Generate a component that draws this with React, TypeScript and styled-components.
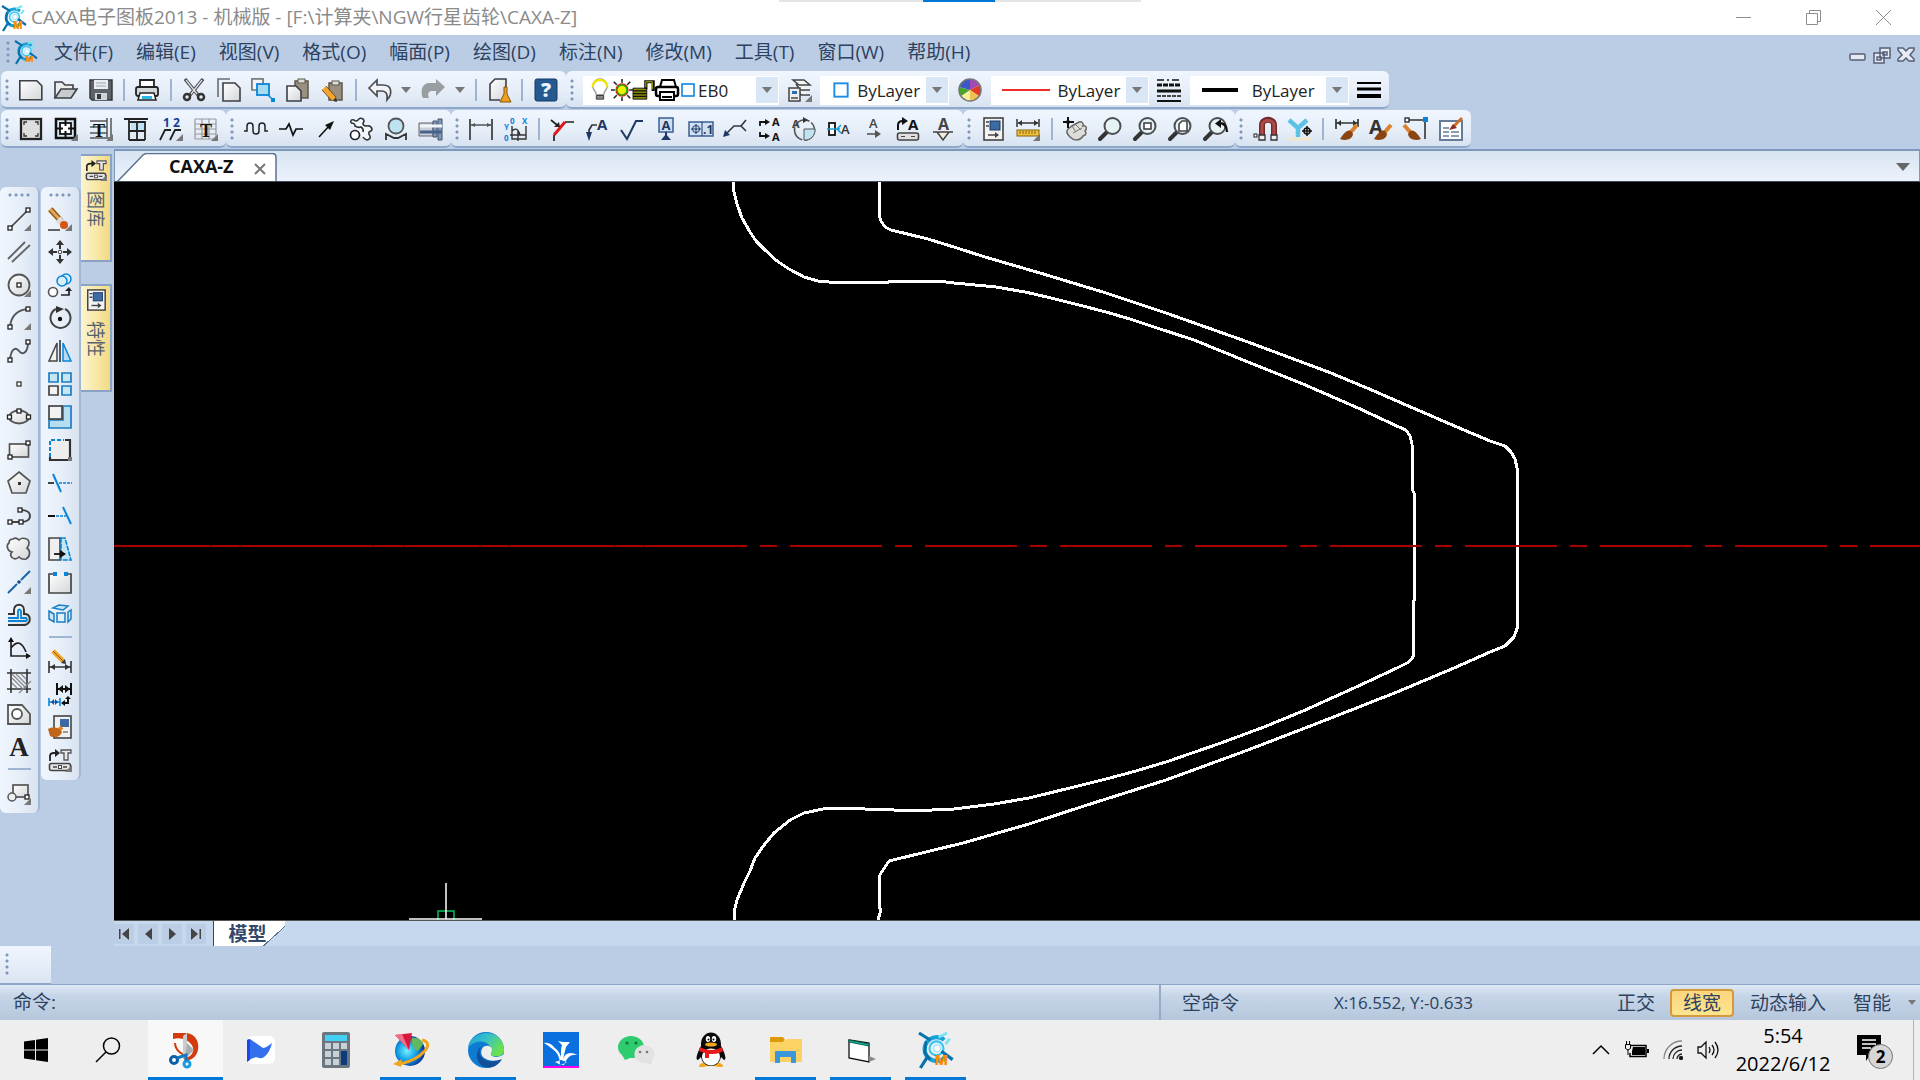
import React from 'react';
import styled, { createGlobalStyle } from 'styled-components';

const INK = '#3c3f44';
const NAVY = '#1f3864';
const BLUE = '#0a84d8';
const UI_FONT = '"Open Sans", "Noto Sans CJK SC", sans-serif';

const GlobalStyle = createGlobalStyle`
  * { box-sizing: border-box; }
  body { margin: 0; background: #bbcde5; font-family: ${UI_FONT}; color: #2c4260; }
  button, select, input { font: inherit; color: inherit; }
  button { border: 0; padding: 0; background: none; }
`;

/* ---------- icons, each on a 24 x 24 grid ---------- */

const corner = <path d="M24 17v7h-7z" fill="#777" />;
const sheet = (x: number, y: number, w: number, h: number) => (
  <path d={`M${x} ${y}h${w - 5}l5 5v${h - 5}h${-w}z`} fill="url(#pale)" stroke={INK} strokeWidth="1.6" />
);
const lens = (
  <>
    <path d="M8.500 15.500L2 22" stroke="#333" strokeWidth="4" strokeLinecap="round" />
    <circle cx="14.500" cy="9" r="8" fill="#e6f3f3" stroke="#4b4f52" strokeWidth="2" />
  </>
);
const node = (x: number, y: number) => (
  <rect x={x - 2} y={y - 2} width="4" height="4" fill="#fff" stroke="#222" strokeWidth="1.300" />
);
const brush = (
  <>
    <path d="M22 8l-7 8" stroke="#d9822b" strokeWidth="4" />
    <path d="M16 14c-4-2-7 2-11 8 5 2 12 1 13-5z" fill="#8a4513" />
  </>
);
const clipboard = (
  <>
    <rect x="9" y="3" width="13" height="17" fill="#9a907f" stroke="#5d564b" strokeWidth="1.500" />
    <rect x="12" y="1" width="7" height="4" fill="#ddd" stroke="#5d564b" />
  </>
);
const libraryGlyph = (
  <>
    <path d="M2 13V8q0-3 4-3h2" fill="none" stroke="#222" strokeWidth="1.800" />
    <path d="M7 1l5 4-5 4z" fill="#222" />
    <path d="M13 2h10v3h-3v7h-4V5h-3z" fill="#e8e8e8" stroke="#555" strokeWidth="1.300" />
    <rect x="1.500" y="15.500" width="21" height="7" rx="2" fill="#e4e4e4" stroke="#444" strokeWidth="1.600" />
    <path d="M5 19h4m6 0h4" stroke="#444" strokeWidth="1.500" />
    <rect x="10.500" y="17.500" width="3" height="3" fill="#fff" stroke="#444" />
  </>
);
const propertyGlyph = (
  <>
    <rect x="3" y="1" width="19" height="22" fill="#f2f2f2" stroke="#444" strokeWidth="1.600" />
    <path d="M5 5h3M5 9h3" stroke="#444" strokeWidth="1.500" />
    <rect x="9" y="4" width="10" height="9" fill="#3b6aa5" stroke="#1f3864" />
    <path d="M7 18h9" stroke="#444" strokeWidth="1.500" />
    <path d="M14 15l4 3-4 3z" fill="#444" />
  </>
);

const icons: Record<string, React.ReactNode> = {
  caxa: (
    <>
      <path d="M18 5A8.500 8.500 0 1 0 19 17" fill="none" stroke="#16a3d8" strokeWidth="3" />
      <path d="M5 6l-1 8 4 5" fill="none" stroke="#0a6aa6" strokeWidth="1.800" />
      <circle cx="12.500" cy="11" r="5" fill="#dff6ff" stroke="#3cc3ee" strokeWidth="1.500" />
      <circle cx="13" cy="11" r="2.500" fill="#fff" stroke="#9fe0f5" strokeWidth="1" />
      <path d="M0 0l8 5M1 25l5-8M16 13l8 6" stroke="#0872ae" strokeWidth="2.300" />
      <path d="M14 3l6-3M19 8l3-4" stroke="#7ce2f5" strokeWidth="2" />
      <text x="11" y="23" fontSize="10" fontWeight="800" fill="#ff8c00">M</text>
    </>
  ),
  new: sheet(0.800, 2.800, 22, 19),
  open: (
    <>
      <path d="M1 20V4h7l3 3h8v4" fill="#ececec" stroke={INK} strokeWidth="1.600" />
      <path d="M1 20l6-9h16l-6 9z" fill="#c9cbce" stroke={INK} strokeWidth="1.600" />
    </>
  ),
  save: (
    <>
      <path d="M1 2h22v20H3l-2-2z" fill="#5d6168" stroke="#34373c" strokeWidth="1.500" />
      <rect x="5" y="2" width="14" height="9" fill="#e9edf2" />
      <path d="M7 5h10M7 8h10" stroke="#9aa3ad" />
      <rect x="6" y="15" width="12" height="7" fill="#cfd3d8" />
      <rect x="8" y="16" width="4" height="5" fill="#34373c" />
    </>
  ),
  print: (
    <>
      <path d="M5 9V2h14v7" fill="#fff" stroke="#222" strokeWidth="1.800" />
      <rect x="1" y="9" width="22" height="9" rx="2" fill="#d5d8db" stroke="#222" strokeWidth="1.800" />
      <path d="M5 15h14l2 7H3z" fill="#fff" stroke="#222" strokeWidth="1.500" />
      <path d="M7 18h10v3H7z" fill="#29b6e0" />
    </>
  ),
  cut: (
    <>
      <path d="M3 1l13 16M21 1L8 17" stroke="#44474c" strokeWidth="3.500" />
      <path d="M4 2l11 14M20 2L9 16" stroke="#dfe2e4" strokeWidth="1.300" />
      <circle cx="5" cy="19" r="3" fill="none" stroke="#333" strokeWidth="2.500" />
      <circle cx="19" cy="19" r="3" fill="none" stroke="#333" strokeWidth="2.500" />
    </>
  ),
  copy: (
    <>
      <path d="M1 19V1h12" fill="none" stroke="#6a6d72" strokeWidth="1.600" />
      {sheet(6, 5, 17, 18)}
    </>
  ),
  copyBase: (
    <>
      <path d="M1 12V1h11v4" fill="#f3f3f3" stroke="#777" strokeWidth="1.500" />
      <path d="M1 1h11v11H1z" fill="#f3f3f3" stroke="#777" strokeWidth="1.500" />
      <rect x="6" y="6" width="12" height="11" fill="#a6dcf2" stroke={BLUE} strokeWidth="1.800" />
      <path d="M17 17l4 4" stroke={BLUE} strokeWidth="1.500" fill="none" />
      <rect x="20" y="20" width="4" height="4" fill={BLUE} />
    </>
  ),
  paste: (
    <>
      {clipboard}
      {sheet(1, 8, 14, 15)}
    </>
  ),
  pasteEdit: (
    <>
      <g transform="translate(-1 2)">{clipboard}</g>
      <path d="M3 10l10 11" stroke="#f2a52c" strokeWidth="5" />
      <path d="M1 12L11 23M5 8l10 11" stroke="#7c4a10" strokeWidth="1" />
      <path d="M12 23l4 1-1-5z" fill="#333" />
    </>
  ),
  undo: <path d="M1 10l8-8v5h6c10 0 9 10 4 15 1-6-1-9-5-9H9v5z" fill="#f2f4f6" stroke="#4a4d52" strokeWidth="1.700" />,
  redo: <path d="M24 9l-9-8v4H9C-1 5 0 16 2 20h6c-2-5 0-7 3-7h4v5z" fill="#9a9da1" />,
  cleanDoc: (
    <>
      <path d="M19 20V1H8L3 6v16h10" fill="url(#pale)" stroke={INK} strokeWidth="1.600" />
      <path d="M17 9h3v7l4 8H13l4-8z" fill="#f0a01e" stroke="#80520e" />
    </>
  ),
  help: (
    <>
      <rect x="1" y="1" width="22" height="22" rx="2" fill="#245a90" stroke="#123a64" />
      <text x="12" y="19" textAnchor="middle" fontSize="20" fontWeight="800" fill="#e8f3fb">?</text>
    </>
  ),
  bulb: (
    <>
      <path d="M8 17c0-4-4-5-4-9a8 8 0 0 1 16 0c0 4-4 5-4 9z" fill="#fff" stroke="#999" strokeWidth="1.500" />
      <path d="M4 9a8 8 0 0 1 16 0" fill="none" stroke="#eee600" strokeWidth="2.500" />
      <path d="M8 18h8v4H8z" fill="#888" stroke="#333" />
    </>
  ),
  sun: (
    <>
      <path d="M12 0v24M0 12h24M3 3l18 18M21 3L3 21" stroke="#222" strokeWidth="1.700" />
      <circle cx="12" cy="12" r="8" fill="#fff" />
      <circle cx="12" cy="12" r="6.500" fill="#eef200" stroke="#e02010" strokeWidth="1.500" />
      <circle cx="12" cy="12" r="5.400" fill="none" stroke="#18a818" strokeWidth="1.500" />
    </>
  ),
  unlock: (
    <>
      <path d="M0 10h15v12H0z" fill="#8a8a00" stroke="#111" />
      <path d="M0 13h15M0 16h15M0 19h15" stroke="#111" strokeWidth="1.500" />
      <path d="M14 11V3h8v10" fill="none" stroke="#111" strokeWidth="3.500" />
      <path d="M14 9V3h7v8" fill="none" stroke="#c8c800" strokeWidth="1" />
    </>
  ),
  plot: (
    <>
      <path d="M5 9l2-7h12l2 7" fill="#fff" stroke="#000" strokeWidth="2" />
      <rect x="1" y="9" width="22" height="9" rx="2" fill="#fff" stroke="#000" strokeWidth="2.500" />
      <path d="M5 14h14v8H5z" fill="#fff" stroke="#000" strokeWidth="2" />
      <path d="M7 19h10" stroke="#000" strokeWidth="2" />
    </>
  ),
  swatch: <rect x="4" y="4" width="16" height="16" fill="#fff" stroke="#1d8ee8" strokeWidth="2.300" />,
  layers: (
    <>
      <path d="M5 2h11l6 5H11zM8 6l4 6h10M9 11l4 6h9" fill="#f7f7f7" stroke="#444" strokeWidth="1.500" />
      <rect x="1" y="10" width="11" height="13" fill="#eee" stroke="#444" strokeWidth="1.500" />
      <path d="M4 13h5v3H4z" fill="#2f6cb0" />
      <path d="M3 20h7" stroke="#444" strokeWidth="1.500" />
      {corner}
    </>
  ),
  wheel: (
    <>
      <path d="M12 12L1 9A11 11 0 0 1 12 1z" fill="#3a58c8" />
      <path d="M12 12V1a11 11 0 0 1 10 6z" fill="#a04bb5" />
      <path d="M12 12l10-5a11 11 0 0 1-1 11z" fill="#e33b25" />
      <path d="M12 12l9 6a11 11 0 0 1-9 5z" fill="#f0c050" />
      <path d="M12 12v11A11 11 0 0 1 3 18z" fill="#f4ef9a" />
      <path d="M12 12l-9 6A11 11 0 0 1 1 9z" fill="#4aa32c" />
      <circle cx="12" cy="12" r="11" fill="none" stroke="#777" strokeWidth="1.500" />
    </>
  ),
  linetypes: (
    <>
      <path d="M0 2h24" stroke="#111" strokeWidth="1.500" strokeDasharray="7 3 2 3" />
      <path d="M0 7h24" stroke="#111" strokeWidth="3" strokeDasharray="5 1" />
      <path d="M0 13h24" stroke="#111" strokeWidth="3" />
      <path d="M0 18h24" stroke="#111" strokeWidth="1.500" strokeDasharray="4 1" />
      <path d="M0 23h24" stroke="#111" strokeWidth="2" />
    </>
  ),
  weights: (
    <>
      <path d="M0 5h24" stroke="#000" strokeWidth="2" />
      <path d="M0 11h24" stroke="#000" strokeWidth="3" />
      <path d="M0 18h24" stroke="#000" strokeWidth="4" />
    </>
  ),
  frame: (
    <>
      <rect x="2" y="2" width="20" height="20" fill="#dedede" stroke="#222" strokeWidth="2.300" />
      <path d="M5 8V5h3M16 5h3v3M19 16v3h-3M8 19H5v-3" fill="none" stroke="#333" strokeWidth="1.300" />
    </>
  ),
  frameIn: (
    <>
      <rect x="2" y="2" width="19" height="19" fill="#d8e8f0" stroke="#111" strokeWidth="2.500" />
      <rect x="6" y="6" width="11" height="11" fill="#fff" stroke="#111" strokeWidth="1.800" />
      <path d="M11.500 3v6M11.500 14v6M3 11.500h6M14 11.500h6" fill="none" stroke="#111" strokeWidth="2" />
      {corner}
    </>
  ),
  titleBlock: (
    <>
      <path d="M1 4h17M1 10h17M1 16h17M1 21h20M18 1v19M22 1v20" stroke="#555" strokeWidth="1.500" />
      <text x="10" y="20" textAnchor="middle" fontSize="18" fontWeight="800" fontFamily="Liberation Serif" fill="#111">T</text>
      {corner}
    </>
  ),
  paramTable: (
    <>
      <path d="M7 6h5v7H7zM14 6h6v7h-6z" fill="#bfe2f4" />
      <path d="M0 2h24M5 5h16v18M5 2v21M5 14h16M5 23h16M13 5v18" fill="none" stroke="#222" strokeWidth="1.800" />
    </>
  ),
  serial: (
    <>
      <text x="4" y="10" fontSize="12" fontWeight="700" fill="#123a9a">1</text>
      <text x="14" y="10" fontSize="12" fontWeight="700" fill="#123a9a">2</text>
      <path d="M1 23l5-10h6M11 23l5-10h6" fill="none" stroke="#222" strokeWidth="1.800" />
      {corner}
    </>
  ),
  parts: (
    <>
      <path d="M1 2h21M1 7h21M1 12h21M1 17h21M1 22h21M1 2v20M8 2v20M15 2v20M22 2v20" stroke="#999" strokeWidth="1.200" />
      <text x="12" y="20" textAnchor="middle" fontSize="18" fontWeight="800" fontFamily="Liberation Serif" fill="#111">T</text>
      {corner}
    </>
  ),
  wave: <path d="M0 14h3V9q0-3 3-3t3 3v5q0 3 3 3t3-3V9q0-3 3-3t3 3v5h3" fill="none" stroke="#222" strokeWidth="1.500" />,
  breakLine: <path d="M0 12h7l3-5 4 11 3-6h7" fill="none" stroke="#111" strokeWidth="1.700" />,
  arrow: (
    <>
      <path d="M5 20L16 8" stroke="#111" strokeWidth="1.600" />
      <path d="M20 4l-4 9-5-5z" fill="#111" />
    </>
  ),
  gears: (
    <>
      <path d="M2 6q-1-4 3-3 2 2 4 0 2-3 5-1 2 2 0 4 0 3 3 3 5-1 6 3 0 2-3 3-1 2 1 4 1 3-3 4-3-1-4-3" fill="#f2f8fb" stroke="#333" strokeWidth="1.600" />
      <path d="M2 6q4 0 4 3 3 2 6 1 3 2 2 5" fill="none" stroke="#333" strokeWidth="1.600" />
      <circle cx="6" cy="18" r="4.500" fill="#fff" stroke="#222" strokeWidth="1.700" />
    </>
  ),
  magnifyPart: (
    <>
      <circle cx="12" cy="9" r="7.500" fill="#bde3f3" stroke="#555" strokeWidth="1.800" />
      <path d="M2 23v-6l8 4h4l8-4v6" fill="none" stroke="#333" strokeWidth="1.800" />
    </>
  ),
  shaft: (
    <>
      <path d="M0 6h14v13H0z" fill="#c9cfd6" stroke="#666" />
      <path d="M14 4h4v16h-4zM19 2h4v21h-4z" fill="#7e98bd" stroke="#456" />
      <path d="M1 9h22" stroke="#f2f5f8" strokeWidth="3" />
      <path d="M1 15h22" stroke="#46628c" strokeWidth="3" />
    </>
  ),
  dim: (
    <>
      <path d="M1 2v21M23 2v21" stroke="#222" strokeWidth="1.500" />
      <path d="M2 8h20" stroke="#555" strokeWidth="1.500" />
      <path d="M2 8l4-2v4zM22 8l-4-2v4z" fill="#555" />
    </>
  ),
  coordDim: (
    <>
      <text x="6" y="7" fontSize="8" fontWeight="700" fill={BLUE}>0</text>
      <text x="18" y="7" fontSize="8" fontWeight="700" fill={BLUE}>X</text>
      <text x="0" y="13" fontSize="8" fontWeight="700" fill={BLUE}>Y</text>
      <text x="0" y="24" fontSize="8" fontWeight="700" fill={BLUE}>0</text>
      <path d="M8 9v13h14V9M8 14c5-5 7 1 8 4h6M6 18h16M14 13v11" fill="none" stroke="#333" strokeWidth="1.400" />
    </>
  ),
  chamfer: (
    <>
      <path d="M15 5h9M4 18v6" stroke="#222" strokeWidth="1.700" />
      <path d="M15 5L4 18" stroke="#e01818" strokeWidth="3" />
      <path d="M1 3l6 5" stroke="#222" strokeWidth="1.700" />
      <path d="M10 10H4l5-5z" fill="#222" />
    </>
  ),
  leader: (
    <>
      <path d="M4 20V13l3-5h5" fill="none" stroke="#333" strokeWidth="1.700" />
      <path d="M1 15h6l-3 9z" fill={NAVY} />
      <text x="12" y="13" fontSize="15" fontWeight="700" fill={NAVY}>A</text>
    </>
  ),
  rough: <path d="M1 13l6 9L16 4h7" fill="none" stroke={NAVY} strokeWidth="2" />,
  datum: (
    <>
      <rect x="5" y="1" width="14" height="14" fill="#cfe0f2" stroke="#3b5f94" strokeWidth="1.500" />
      <text x="12" y="13" textAnchor="middle" fontSize="13" fontWeight="700" fill={NAVY}>A</text>
      <path d="M12 15v3" stroke={NAVY} strokeWidth="2" />
      <path d="M12 17l5 6H7z" fill={NAVY} />
    </>
  ),
  tolerance: (
    <>
      <rect x="0" y="5" width="24" height="14" fill="#cfe0f2" stroke="#3b5f94" strokeWidth="1.500" />
      <circle cx="7" cy="12" r="3.500" fill="none" stroke={NAVY} />
      <path d="M7 7v10M2 12h10M13 5v14" stroke={NAVY} />
      <text x="14" y="17" fontSize="12" fontWeight="700" fill={NAVY}>.1</text>
    </>
  ),
  weld: (
    <>
      <path d="M3 17L11 9h7M23 3l-5 6 5 5" fill="none" stroke="#334" strokeWidth="1.600" />
      <path d="M0 20l2-7 5 5z" fill={NAVY} />
    </>
  ),
  section: (
    <>
      <path d="M2 9V5h6M2 15v4h6" fill="none" stroke="#111" strokeWidth="1.800" />
      <path d="M7 2l5 3-5 3zM7 16l5 3-5 3z" fill="#111" />
      <text x="14" y="9" fontSize="11" fontWeight="700" fill="#111">A</text>
      <text x="14" y="24" fontSize="11" fontWeight="700" fill="#111">A</text>
    </>
  ),
  rotateA: (
    <>
      <circle cx="12.500" cy="13" r="10" fill="none" stroke="#555" strokeWidth="1.600" strokeDasharray="16 2" />
      <path d="M12 12h11a10 10 0 0 1-11 11z" fill="#bfe3f3" stroke="#555" />
      <text x="0" y="11" fontSize="11" fontWeight="700" fill="#444">A</text>
      <path d="M11 0l5 3-5 3z" fill="#333" />
    </>
  ),
  boxA: (
    <>
      <rect x="2" y="6" width="6" height="12" fill="#fff" stroke="#111" strokeWidth="1.800" />
      <path d="M0 12h13M14 8l-4 4 4 4" fill="none" stroke="#18a0d8" strokeWidth="1.500" />
      <text x="14" y="17" fontSize="13" fontWeight="600" fill="#333">A</text>
    </>
  ),
  arrowA: (
    <>
      <text x="7" y="11" fontSize="13" fontWeight="600" fill="#444">A</text>
      <path d="M5 17h9" stroke="#555" strokeWidth="1.600" />
      <path d="M13 13l6 4-6 4z" fill="#555" />
    </>
  ),
  panelA: (
    <>
      <path d="M2 13V8q0-4 5-4" fill="none" stroke="#111" strokeWidth="2" />
      <path d="M6 0l6 4-6 4z" fill="#111" />
      <text x="12" y="13" fontSize="15" fontWeight="700" fill="#111">A</text>
      <rect x="1.500" y="16" width="21" height="7" rx="2" fill="#e0e0e0" stroke="#444" strokeWidth="1.600" />
      <path d="M5 19.500h4m6 0h4" stroke="#444" />
    </>
  ),
  deltaA: (
    <>
      <text x="7" y="13" fontSize="16" fontWeight="700" fill="#444">A</text>
      <path d="M2 15h20M6 15l6 8 6-8" fill="#f3efdc" stroke="#444" strokeWidth="1.500" />
    </>
  ),
  property: propertyGlyph,
  measure: (
    <>
      <path d="M1 2v8M23 2v8M2 6h20" stroke="#333" strokeWidth="1.500" />
      <path d="M2 6l4-3v6zM22 6l-4-3v6z" fill="#333" />
      <rect x="1" y="13" width="22" height="6" fill="#f3c33a" stroke="#80600e" />
      <path d="M4 14v3m3-3v3m3-3v3m3-3v3m3-3v3m3-3v3" stroke="#80600e" />
      {corner}
    </>
  ),
  pan: (
    <>
      <path d="M5 12l4-3 7-4c3-1 5 2 4 4 4-1 4 3 2 5 2 2 1 4-2 5-3 5-9 5-13 1-3-3-4-6-2-8z" fill="#dcdcd9" stroke="#666" strokeWidth="1.500" />
      <path d="M9 9l4 6M13 8l5 5M10 16l9-5" fill="none" stroke="#777" />
      <path d="M5 0v11M0 5h11" stroke="#111" strokeWidth="2" />
      <circle cx="5" cy="5" r="2" fill="#111" />
    </>
  ),
  zoom: lens,
  zoomWin: (
    <>
      {lens}
      <rect x="11" y="6" width="7" height="6" fill="#fff" stroke="#444" strokeWidth="1.600" />
    </>
  ),
  zoomPage: (
    <>
      {lens}
      <path d="M11 14V7l3-3h5v10z" fill="#fff" stroke="#444" strokeWidth="1.600" />
    </>
  ),
  zoomBack: (
    <>
      {lens}
      <path d="M24 15c0-6-3-9-8-9" fill="none" stroke="#111" strokeWidth="2.300" />
      <path d="M18 2v9l-6-4.500z" fill="#111" />
    </>
  ),
  magnet: (
    <>
      <rect x="1" y="17" width="3" height="3" fill="#fff" stroke="#222" />
      <path d="M9 23V8c0-7 12-7 12 0v15" fill="none" stroke="#702a2a" strokeWidth="6" />
      <path d="M9 18V8c0-6 12-6 12 0v10" fill="none" stroke="#b04a4a" strokeWidth="3" />
      <path d="M6 18h6v5H6zM18 18h6v5h-6z" fill="#eee" stroke="#333" strokeWidth="1.300" />
    </>
  ),
  snap: (
    <>
      <path d="M1 3l9 8v9M19 3l-9 8" fill="none" stroke="#5cc3e6" strokeWidth="4.500" />
      <path d="M0 22h24" stroke="#efe6cc" strokeWidth="3" />
      <circle cx="19" cy="14" r="3" fill="#fff" stroke="#111" strokeWidth="1.500" />
      <path d="M19 9v10M14 14h10" stroke="#111" strokeWidth="1.500" />
    </>
  ),
  dimStyle: (
    <>
      <path d="M1 2v10M23 2v8M1 6h22" stroke="#333" strokeWidth="1.700" />
      <path d="M2 6l4-3v6zM22 6l-4-3v6z" fill="#333" />
      {brush}
    </>
  ),
  textStyle: (
    <>
      <text x="0" y="17" fontSize="20" fontWeight="700" fill="#333">A</text>
      {brush}
    </>
  ),
  snapStyle: (
    <>
      <path d="M4 3h17v19" fill="none" stroke="#333" strokeWidth="1.600" />
      <g transform="translate(22 0) scale(-1 1)">{brush}</g>
      {node(3, 3)}
      <rect x="19" y="0" width="5" height="5" fill={BLUE} />
    </>
  ),
  styleManager: (
    <>
      <rect x="1" y="4" width="22" height="19" fill="#fdfdfd" stroke="#667d99" strokeWidth="2" />
      <path d="M4 11h6M4 15h6M4 19h6M12 15h8M12 19h8" stroke="#667d99" strokeWidth="1.500" />
      <path d="M23 1l-8 8" stroke="#c86f28" strokeWidth="3" />
      <path d="M10 13l4-6 4 4z" fill="#8a3020" />
    </>
  ),
  line: <><path d="M3 21L21 3" stroke="#444" strokeWidth="1.700" />{node(3, 21)}{node(21, 3)}{corner}</>,
  parallel: <path d="M1 19L18 2M5 22L23 5" stroke="#666" strokeWidth="1.900" />,
  circle: <><circle cx="12" cy="12" r="10.500" fill="url(#pale)" stroke="#555" strokeWidth="1.800" />{node(12, 12)}{corner}</>,
  arc: <><path d="M3 21C4 10 10 4 21 3" fill="none" stroke="#555" strokeWidth="1.800" />{node(3, 21)}{node(21, 3)}{corner}</>,
  spline: <><path d="M3 21c1-12 6-13 9-9s9 3 9-9" fill="none" stroke="#555" strokeWidth="1.900" />{node(3, 21)}{node(21, 3)}</>,
  point: <rect x="10" y="10" width="4" height="4" fill="#fff" stroke="#444" strokeWidth="1.400" />,
  ellipse: <><ellipse cx="12" cy="12" rx="10" ry="6.500" fill="url(#pale)" stroke="#555" strokeWidth="1.800" />{node(2.500, 12)}{node(21.500, 12)}{node(12, 6)}</>,
  rect: <><rect x="2.500" y="6" width="19" height="13" fill="url(#pale)" stroke="#555" strokeWidth="1.700" />{node(3, 19)}{node(21, 5)}</>,
  pentagon: <><path d="M12 1l11 9-4 12H5L1 10z" fill="url(#pale)" stroke="#555" strokeWidth="1.700" /><rect x="11" y="11" width="3" height="3" fill="#333" /></>,
  polyline: <><path d="M2 18h12c5 0 9-2 9-6s-4-6-9-6" fill="none" stroke="#444" strokeWidth="1.900" />{node(3, 18)}{node(14, 18)}{node(13, 6)}</>,
  cloud: <path d="M6 2c3-2 5 0 6 1 3-3 10-2 10 3 0 2 0 3-2 5 4 3 3 9-1 11-4 1-6-1-7-2-3 3-7 2-8-1-1-2 0-3 1-4-5-1-6-7-3-9 0-3 2-4 4-4z" fill="url(#pale)" stroke="#555" strokeWidth="1.700" />,
  centerLine: <><path d="M1 23l9-9M14 10L23 1" stroke="#1b66a8" strokeWidth="2" /><circle cx="12" cy="12" r="1.800" fill="#1b4a88" />{corner}</>,
  offset: (
    <>
      <path d="M1 11h6V7c0-7 10-7 10 0v4c7-1 8 9 1 11H1" fill="url(#pale)" stroke="#333" strokeWidth="1.900" />
      <path d="M1 15h10V8q1-3 3 0v7h5q2 2 0 3H1" fill="none" stroke={BLUE} strokeWidth="1.800" />
    </>
  ),
  formula: (
    <>
      <path d="M4 3v17h18M4 12c6-8 11-6 15 4" fill="none" stroke="#222" strokeWidth="1.700" />
      <path d="M1 6l3-5 3 5zM19 17l5 3-5 3z" fill="#111" />
    </>
  ),
  hatch: (
    <>
      <path d="M4 0v24M20 0v24M0 4h24M0 20h24" stroke="#333" strokeWidth="1.600" />
      <path d="M5 9l10 10M5 14l5 5M9 5l10 10M14 5l5 5M5 5l14 14M12 24L24 12" stroke="#888" strokeWidth="1.200" />
    </>
  ),
  region: (
    <>
      <path d="M1 3h14l8 9v10H1z" fill="url(#pale)" stroke="#555" strokeWidth="1.800" />
      <circle cx="10" cy="12" r="5" fill="#fff" stroke="#555" strokeWidth="1.800" />
    </>
  ),
  text: <text x="12" y="21" textAnchor="middle" fontSize="27" fontWeight="700" fontFamily="Liberation Serif" fill="#222">A</text>,
  block: (
    <>
      <rect x="6" y="4" width="15" height="12" fill="url(#pale)" stroke="#555" strokeWidth="1.700" />
      <circle cx="5" cy="16" r="4" fill="#eee" stroke="#555" strokeWidth="1.500" />
      {node(20, 16)}
      {corner}
    </>
  ),
  erase: (
    <>
      <path d="M0 23h12" stroke="#333" strokeWidth="1.500" />
      <path d="M2 2l12 13" stroke="#e3a857" strokeWidth="6" />
      <path d="M1 4l12 13M4 1l11 12" stroke="#8c5a20" strokeWidth="1.300" />
      <path d="M10 12l4 4" stroke="#dedede" strokeWidth="7" />
      <circle cx="16" cy="18" r="4" fill="#d65414" />
      {corner}
    </>
  ),
  move: (
    <>
      <path d="M12 0l4 5h-3v4h-2V5H8zM12 24l4-5h-3v-4h-2v4H8zM0 12l5-4v3h4v2H5v3zM24 12l-5-4v3h-4v2h4v3z" fill="#333" />
      <circle cx="12" cy="12" r="1.800" fill="#fff" stroke="#333" />
    </>
  ),
  duplicate: (
    <>
      <circle cx="18" cy="6" r="5" fill="#d8effa" stroke={BLUE} strokeWidth="1.500" />
      <circle cx="14" cy="8" r="5" fill="#d8effa" stroke={BLUE} strokeWidth="1.500" />
      <circle cx="5" cy="19" r="4.500" fill="#fff" stroke="#555" strokeWidth="1.600" />
      <path d="M13 22h8v-6" fill="none" stroke="#222" strokeWidth="1.700" />
      <path d="M17 18l4-4 3 4z" fill="#222" />
    </>
  ),
  rotate: (
    <>
      <path d="M8 3a10 10 0 1 0 9 0" fill="none" stroke="#444" strokeWidth="2" />
      <path d="M8 0l8 3-8 4z" fill="#333" />
      <circle cx="12" cy="13" r="2.200" fill="#111" />
    </>
  ),
  mirror: (
    <>
      <path d="M9 4v18H1z" fill="#f1f1f1" stroke="#444" strokeWidth="1.500" />
      <path d="M15 4v18h8z" fill="#b8dcf3" stroke={BLUE} strokeWidth="1.500" />
      <path d="M12 1v22" stroke="#333" strokeWidth="1.600" />
    </>
  ),
  array: (
    <>
      <path d="M1 1h9v9H1zM14 1h9v9h-9zM14 14h9v9h-9z" fill="#c6e5f5" stroke="#1b7ec4" strokeWidth="1.700" />
      <path d="M1 14h9v9H1z" fill="#f2f2f2" stroke="#444" strokeWidth="1.700" />
    </>
  ),
  scale: (
    <>
      <path d="M1 15v8h22V1h-8v14z" fill="#b6def0" stroke="#1b7ec4" strokeWidth="1.700" />
      <rect x="1" y="1" width="13" height="13" fill="#f2f2f2" stroke="#444" strokeWidth="1.700" />
    </>
  ),
  stretch: (
    <>
      <rect x="2" y="2" width="19" height="19" fill="#ededed" />
      <path d="M2 19V2h14" fill="none" stroke={BLUE} strokeWidth="2" strokeDasharray="4 2" />
      <path d="M17 2h5v20H2v-3" fill="none" stroke="#333" strokeWidth="2.200" />
      <rect x="20" y="19" width="4" height="4" fill="#777" />
    </>
  ),
  trim: (
    <>
      <path d="M5 3l8 18" stroke={BLUE} strokeWidth="2" />
      <path d="M0 12h6" stroke="#222" strokeWidth="1.700" />
      <path d="M11 12h13" stroke={BLUE} strokeWidth="1.700" strokeDasharray="3 1" />
    </>
  ),
  extend: (
    <>
      <path d="M15 3l8 17" stroke={BLUE} strokeWidth="2" />
      <path d="M0 12h7" stroke="#111" strokeWidth="2" />
      <path d="M8 12h10" stroke={BLUE} strokeWidth="1.700" strokeDasharray="3 1" />
    </>
  ),
  shear: (
    <>
      <path d="M12 1H1v22h11z" fill="#efefef" stroke="#444" strokeWidth="1.600" />
      <path d="M13 1h4l6 22H13z" fill="#c3e6f4" stroke={BLUE} strokeWidth="1.600" strokeDasharray="5 1" />
      <path d="M6 17h8" stroke="#111" strokeWidth="1.800" />
      <path d="M12 13l6 4-6 4z" fill="#111" />
    </>
  ),
  breakAt: (
    <>
      <path d="M5 4H1v19h22V4h-4" fill="url(#pale)" stroke="#444" strokeWidth="1.700" />
      <path d="M5 2h4v4H5zM16 2h4v4h-4z" fill={BLUE} />
    </>
  ),
  explode: (
    <>
      <path d="M5 5l6-3 9 1-5 4zM1 8l5 3v8l-5-3zM20 9l3-2v9l-3 3z" fill="#c8e7f7" stroke="#1b7ec4" strokeWidth="1.500" />
      <rect x="9" y="10" width="8" height="9" fill="#dff1fa" stroke="#1b7ec4" strokeWidth="1.500" />
    </>
  ),
  dimEdit: (
    <>
      <path d="M1 12v12M23 12v12M1 18h22" stroke="#333" strokeWidth="1.600" />
      <path d="M2 18l5-3v6zM22 18l-5-3v6z" fill="#333" />
      <path d="M5 2l10 10" stroke="#f0a92c" strokeWidth="5" />
      <path d="M5 2l10 10" stroke="#8c5a10" />
      <path d="M13 14l5 1-1-5z" fill="#333" />
    </>
  ),
  dimDrive: (
    <>
      <path d="M9 1v12M23 1v12M9 7h14" stroke="#111" strokeWidth="2" />
      <path d="M10 7l5-4v8zM22 7l-5-4v8z" fill="#111" />
      <path d="M1 16v8M12 16v8M1 20h11" stroke={BLUE} strokeWidth="1.600" />
      <path d="M3 20l3-3v6zM10 20l-3-3v6z" fill="#104a9a" />
      <path d="M15 21h5v-5" fill="none" stroke="#111" strokeWidth="2" />
      <path d="M17 17l3-3 3 3zM17 18v6l-4-3z" fill="#111" />
    </>
  ),
  match: (
    <>
      <rect x="6" y="1" width="17" height="22" fill="#f0f0f0" stroke="#444" strokeWidth="1.600" />
      <rect x="12" y="4" width="9" height="8" fill="#3b6aa5" />
      <path d="M14 12l-5 5" stroke="#e08a30" strokeWidth="4" />
      <path d="M0 14c6-3 12-1 14 3-2 6-9 6-12 4z" fill="#c0661c" />
      <path d="M15 17h5" stroke="#444" />
    </>
  ),
  library: <>{libraryGlyph}{corner}</>,
};

const Glyph = styled.svg`
  display: block;
  flex: none;
  overflow: visible;
  font-family: "Open Sans", sans-serif;
`;

function Icon({ name, size = 24 }: { name: string; size?: number }) {
  return (
    <Glyph width={size} height={size} viewBox="0 0 24 24" fill="none" aria-hidden="true">
      {icons[name]}
    </Glyph>
  );
}

/* ---------- shell ---------- */

const Shell = styled.div`
  min-height: 100vh;
  display: flex;
  flex-direction: column;
  position: relative;
`;

const TitleBar = styled.header`
  height: 35px;
  background: #fff;
  display: flex;
  align-items: center;
  padding: 0 2px;
  gap: 5px;
`;

const WindowTitle = styled.h1`
  margin: 0;
  padding-bottom: 2px;
  flex: 1;
  font-size: 19px;
  line-height: 24px;
  font-weight: 400;
  color: #8a8a8a;
`;

const CaptionButton = styled.button`
  width: 70px;
  height: 33px;
  display: grid;
  place-items: center;
`;

const CaptionGroup = styled.div`
  display: flex;
`;

const CaptureTab = styled.div`
  position: absolute;
  top: 0;
  left: 779px;
  width: 362px;
  height: 2px;
  background: linear-gradient(90deg, #e5e5e5 144px, #0078d7 144px 216px, #e5e5e5 216px);
`;

const MenuBar = styled.nav`
  height: 36px;
  display: flex;
  align-items: center;
  padding: 0 5px 2px 6px;
`;

const Grip = styled.span<{ $flat?: boolean }>`
  display: block;
  flex: none;
  width: ${p => (p.$flat ? '24px' : '4px')};
  height: ${p => (p.$flat ? '4px' : '24px')};
  background-image: radial-gradient(circle, #7f97bd 1px, transparent 2px);
  background-size: ${p => (p.$flat ? '6px 4px' : '4px 6px')};
`;

const MenuLogo = styled.span`
  display: grid;
  margin: 0 17px 0 5px;
`;

const MenuList = styled.ul`
  flex: 1;
  display: flex;
  gap: 23px;
  margin: 0;
  padding: 0;
  list-style: none;
`;

const MenuButton = styled.button`
  font-size: 19px;
  line-height: 28px;
  white-space: nowrap;
`;

const MdiGroup = styled.div`
  display: flex;
  gap: 6px;
  padding-top: 8px;
`;

const ToolRow = styled.div`
  display: flex;
  height: 39px;
  padding-left: 1px;
`;

const ToolGroup = styled.div<{ $min: number }>`
  min-width: ${p => p.$min}px;
  height: 38px;
  display: flex;
  align-items: center;
  padding: 2px 3px 0 4px;
  border-radius: 6px;
  border-bottom: 2px solid #8fa8c9;
  background: linear-gradient(#f0f6fe, #e6eef8 55%, #d8e3f1);
  & > ${Grip}:first-child { margin-right: 5px; }
`;

const ToolButton = styled.button`
  flex: 1 0 30px;
  height: 32px;
  display: grid;
  place-items: center;
`;

const NarrowButton = styled.button`
  flex: 0 0 19px;
  height: 32px;
  display: grid;
  place-items: center;
`;

const Divider = styled.span`
  flex: 0 0 2px;
  height: 22px;
  margin: 0 5px;
  background: #9fb3d2;
`;

const ComboBox = styled.label<{ $width: number }>`
  display: flex;
  align-items: center;
  width: ${p => p.$width}px;
  height: 29px;
  margin: 0 4px;
  padding-right: 1px;
  background: #fff;
`;

const ComboSelect = styled.select<{ $inset: number }>`
  appearance: none;
  flex: 1;
  min-width: 0;
  height: 28px;
  border: 0;
  padding: 0 0 0 ${p => p.$inset}px;
  background: transparent;
  color: #222;
  font-size: 17px;
`;

const ComboArrow = styled.span`
  flex: 0 0 22px;
  height: 26px;
  display: grid;
  place-items: center;
  background: #d8e6f5;
`;

const ComboIcons = styled.span<{ $pad: number }>`
  display: flex;
  align-items: center;
  padding-left: ${p => p.$pad}px;
`;

const LineSample = styled.span<{ $weight: number; $color: string; $width: number }>`
  width: ${p => p.$width}px;
  height: ${p => p.$weight}px;
  background: ${p => p.$color};
`;

/* ---------- workspace ---------- */

const Workspace = styled.main`
  flex: 1;
  display: flex;
  min-height: 0;
`;

const SideDock = styled.aside`
  flex: 0 0 114px;
  display: flex;
  align-items: flex-start;
  gap: 1px;
`;

const ToolColumn = styled.div`
  width: 40px;
  margin-top: 38px;
  padding: 6px 0 4px;
  display: flex;
  flex-direction: column;
  align-items: center;
  border-radius: 6px;
  border-right: 2px solid #a3b6d3;
  background: linear-gradient(90deg, #f0f6fe, #e6eef8 55%, #d8e3f1);
  & > ${Grip} { margin-bottom: 5px; }
`;

const ColumnButton = styled.button`
  width: 34px;
  height: 33px;
  display: grid;
  place-items: center;
`;

const ColumnDivider = styled.span`
  width: 23px;
  height: 2px;
  margin: 5px 0 6px;
  background: #9fb3d2;
`;

const PanelTabs = styled.div`
  display: flex;
  flex-direction: column;
  gap: 22px;
  padding-top: 5px;
  margin-left: -1px;
`;

const PanelTab = styled.button`
  width: 31px;
  height: 108px;
  display: flex;
  flex-direction: column;
  align-items: center;
  gap: 10px;
  padding: 3px 0;
  border: 2px solid #8aa2c4;
  border-left: 0;
  background: linear-gradient(90deg, #fbf4d2, #f8e9a8 50%, #f3d984);
`;

const PanelTabLabel = styled.span`
  writing-mode: vertical-rl;
  text-orientation: sideways;
  font-size: 18px;
  line-height: 24px;
  color: #566070;
`;

const Documents = styled.section`
  flex: 1;
  min-width: 0;
  display: flex;
  flex-direction: column;
`;

const TabStrip = styled.div`
  height: 33px;
  display: flex;
  align-items: flex-end;
  justify-content: space-between;
  border: 1px solid #7e98bc;
  border-top-width: 2px;
  border-bottom-color: #3f4a5a;
  background: linear-gradient(#d7e4f1, #ecf2fc);
`;

const DocumentTab = styled.div`
  position: relative;
  width: 162px;
  height: 28px;
  display: flex;
  align-items: center;
  padding: 0 0 2px 54px;
  gap: 20px;
`;

const TabShape = styled.svg`
  position: absolute;
  inset: 0;
`;

const TabName = styled.button`
  position: relative;
  font-size: 18px;
  line-height: 24px;
  font-weight: 700;
  color: #111;
`;

const TabClose = styled.button`
  position: relative;
  display: grid;
  padding-top: 6px;
`;

const TabList = styled.button`
  width: 32px;
  height: 28px;
  display: grid;
  place-items: center;
`;

const Drawing = styled.div`
  flex: 1;
  min-height: 0;
  background: #000;
  display: flex;
  overflow: hidden;
`;

const DrawingSvg = styled.svg`
  flex: 1;
  width: 100%;
  display: block;
`;

const ModelStrip = styled.div`
  height: 26px;
  display: flex;
  align-items: flex-start;
  border-top: 1px solid #555;
  background: #c6d8ee;
`;

const NavButton = styled.button`
  width: 20px;
  height: 20px;
  margin: 3px 4px 0 0;
  display: grid;
  place-items: center;
  background: #bccee6;
`;

const ModelTab = styled.button`
  width: 72px;
  height: 25px;
  margin-left: 3px;
  padding: 0 18px 0 14px;
  font-size: 19px;
  line-height: 26px;
  font-weight: 700;
  white-space: nowrap;
  color: #33486b;
  border-left: 1px solid #33486b;
  background: linear-gradient(138deg, #fff 0 51px, #5b7291 51px 52px, transparent 52px);
`;

const CommandDock = styled.div`
  height: 39px;
  display: flex;
  border-bottom: 1px solid #8ea5c6;
`;

const CommandGrip = styled.div`
  width: 51px;
  padding: 6px 5px;
  border-bottom: 1px solid #8ea5c6;
  background: linear-gradient(#f0f6fe, #dbe5f3);
`;

const StatusBar = styled.footer`
  height: 35px;
  display: flex;
  align-items: center;
  padding-right: 2px;
  font-size: 19px;
  line-height: 28px;
  background: linear-gradient(#dfe9f5, #c6d5e8 30%, #b6c7dd);
`;

const CommandLine = styled.label`
  flex: 1;
  display: flex;
  padding-left: 13px;
`;

const CommandInput = styled.input`
  flex: 1;
  border: 0;
  background: transparent;
  outline: 0;
`;

const StatusInfo = styled.div`
  flex: 0 0 458px;
  height: 100%;
  display: flex;
  align-items: center;
  gap: 95px;
  padding-left: 21px;
  border-left: 2px solid #98abc6;
`;

const Coordinates = styled.output`
  font-size: 17px;
`;

const StatusToggle = styled.button<{ $on?: boolean }>`
  height: 28px;
  margin-right: ${p => (p.$on ? '16px' : '15px')};
  padding: 0 ${p => (p.$on ? '11px' : '0')};
  border-radius: 4px;
  line-height: 24px;
  border: ${p => (p.$on ? '2px solid #d49a3c' : '0')};
  background: ${p => (p.$on ? 'linear-gradient(#fbd67c, #fde590)' : 'none')};
  &:last-of-type { margin-left: 12px; }
`;

/* ---------- taskbar ---------- */

const Taskbar = styled.footer`
  height: 60px;
  display: flex;
  background: #eee;
  color: #000;
`;

const TaskButton = styled.button<{ $width?: number; $running?: boolean; $active?: boolean }>`
  width: ${p => p.$width ?? 75}px;
  display: grid;
  place-items: center;
  background: ${p => {
    const bar = p.$active ? '75px' : '61px';
    const base = p.$active ? '#f8f8f8' : 'transparent';
    return p.$running ? `linear-gradient(#0078d7, #0078d7) bottom / ${bar} 3px no-repeat ${base}` : base;
  }};
`;

const AppList = styled.div`
  flex: 1;
  display: flex;
  padding-left: 4px;
`;

const Tray = styled.div`
  display: flex;
  align-items: center;
  gap: 14px;
`;

const TrayButton = styled.button`
  display: grid;
`;

const Clock = styled.time`
  width: 96px;
  font-size: 20px;
  line-height: 28px;
  text-align: center;
`;

const Notifications = styled.button`
  position: relative;
  width: 38px;
  height: 40px;
  margin: 0 4px 0 12px;
`;

const Badge = styled.span`
  position: absolute;
  left: 11px;
  top: 14px;
  width: 25px;
  height: 25px;
  border: 1px solid #777;
  border-radius: 50%;
  background: #d6d6d6;
  font-size: 17px;
  line-height: 23px;
  font-weight: 700;
`;

const ShowDesktop = styled.button`
  width: 7px;
  height: 60px;
  border-left: 1px solid #b5b5b5;
`;

/* ---------- content ---------- */

const menus = ['文件(F)', '编辑(E)', '视图(V)', '格式(O)', '幅面(P)', '绘图(D)', '标注(N)', '修改(M)', '工具(T)', '窗口(W)', '帮助(H)'];

const standardTools = ['new', 'open', 'save', '|', 'print', '|', 'cut', 'copy', 'copyBase', 'paste', 'pasteEdit', '|', 'undo', 'v', 'redo', 'v', '|', 'cleanDoc', '|', 'help'];

const secondRow: { width: number; items: string[] }[] = [
  { width: 225, items: ['frame', 'frameIn', 'titleBlock', 'paramTable', 'serial', 'parts'] },
  { width: 225, items: ['wave', 'breakLine', 'arrow', 'gears', 'magnifyPart', 'shaft'] },
  { width: 512, items: ['dim', 'coordDim', '|', 'chamfer', 'leader', 'rough', 'datum', 'tolerance', 'weld', 'section', 'rotateA', 'boxA', 'arrowA', 'panelA', 'deltaA'] },
  { width: 272, items: ['property', 'measure', '|', 'pan', 'zoom', 'zoomWin', 'zoomPage', 'zoomBack'] },
  { width: 236, items: ['magnet', 'snap', '|', 'dimStyle', 'textStyle', 'snapStyle', 'styleManager'] },
];

const drawTools = ['line', 'parallel', 'circle', 'arc', 'spline', 'point', 'ellipse', 'rect', 'pentagon', 'polyline', 'cloud', 'centerLine', 'offset', 'formula', 'hatch', 'region', 'text', '|', 'block'];
const editTools = ['erase', 'move', 'duplicate', 'rotate', 'mirror', 'array', 'scale', 'stretch', 'trim', 'extend', 'shear', 'breakAt', 'explode', '|', 'dimEdit', 'dimDrive', 'match', 'library'];

const toothFlank = '619,0 620,10 623,22 628,36 636,50 642,59 651,68 663,79 675,87 690,95 704,99 715,100 775,100 776,99 824,99 840,101 882,105 911,110 937,116 965,123 992,130 1016,137 1040,145 1080,158 1107,169 1134,180 1189,202 1244,226 1285,245 1292,248 1296,254 1298,262 1299,309 1300,311 1300,415 1301,416 1299,421 1299,466 1300,468 1299,475 1295,480 1283,486 1240,506 1189,529 1150,545 1107,561 1052,580 1022,589 992,597 960,605 915,616 880,622 840,627 797,629 780,628 751,627 720,626 709,627 690,631 676,638 660,651 650,663 641,676 636,689 630,701 623,718 621,726 620,735 621,738';
const blankOutline = '765,0 765,33 767,39 771,45 777,48 814,57 843,66 871,75 926,91 992,111 1052,131 1134,160 1217,191 1260,209 1299,226 1343,245 1376,259 1391,264 1397,270 1401,277 1403,286 1403,441 1404,444 1400,455 1391,464 1376,470 1340,486 1283,510 1217,536 1134,568 1052,598 970,624 915,642 849,661 775,679 771,685 767,691 765,695 765,725 767,728 764,738';

const apps: { name: string; running?: boolean; active?: boolean; art: React.ReactNode }[] = [
  {
    name: '截图工具', running: true, active: true,
    art: (
      <>
        <path d="M5 1h12c17 0 17 24 4 27-3 0-5-1-6-2 9 0 13-8 8-14-4-5-11-7-18-5z" fill="#d33a0c" />
        <path d="M7 11c0 6 3 9 9 12" fill="none" stroke="#d33a0c" strokeWidth="2" />
        <path d="M15 4l4-3v25h-4z" fill="#c9cdd1" />
        <path d="M19 11l7 7-9 9z" fill="#a8adb2" />
        <circle cx="6" cy="28" r="3.500" fill="none" stroke="#0b5ea8" strokeWidth="3" />
        <circle cx="19" cy="32" r="3" fill="none" stroke="#1a9be0" strokeWidth="3" />
        <path d="M9 26l9-3v6" fill="none" stroke="#1178c4" strokeWidth="3" />
      </>
    ),
  },
  {
    name: '视频',
    art: (
      <>
        <rect x="4" y="4" width="28" height="28" rx="6" fill="#fff" />
        <path d="M4 8l3-1 13 9c3 0 6-3 9-5-2 9-8 17-13 15-3-2-6 0-12 3z" fill="#3470ee" />
        <path d="M4 8l3-1v21l-3 2z" fill="#1c46ee" />
      </>
    ),
  },
  {
    name: '计算器',
    art: (
      <>
        <rect x="4" y="0" width="28" height="36" rx="2" fill="#6b7680" />
        <rect x="7" y="3" width="22" height="6" fill="#43d0f4" />
        <path d="M7 11h6v6H7zM15 11h6v6h-6zM23 11h6v6h-6zM7 19h6v6H7zM15 19h6v6h-6zM7 27h6v6H7zM15 27h6v6h-6z" fill="#c8d0d8" />
        <rect x="23" y="19" width="6" height="14" fill="#0c3c7c" />
      </>
    ),
  },
  {
    name: '浏览器', running: true,
    art: (
      <>
        <circle cx="17" cy="19" r="15" fill="url(#globe)" />
        <path d="M19 6c6-1 10 2 11 7-3 2-3 6-7 6-2-3-5-6-4-13z" fill="#63b85c" />
        <path d="M29 8c14 3 0 19-22 24" fill="none" stroke="#f0a51e" strokeWidth="3" />
        <path d="M0 32l9-5-1 8z" fill="#f0a51e" />
        <path d="M2 3L19 1l-3 17z" fill="#d8193d" />
        <path d="M2 3l7-1 7 16z" fill="#f2708a" />
      </>
    ),
  },
  {
    name: 'Edge', running: true,
    art: (
      <>
        <circle cx="18" cy="18" r="18" fill="#0f7bd0" />
        <path d="M0 15C4-3 34-5 36 17c0 7-5 8-11 7-4-1-2-3-2-6 0-8-12-13-23-3z" fill="url(#edge)" />
        <path d="M13 15c-5 8 3 19 21 12-7 13-25 11-25-4 0-4 2-7 4-8z" fill="#124f98" />
        <path d="M14 17c2-5 10-4 10 1-1 3-2 4 0 6 4 2 8 1 12-2l-2 5c-13 5-24-2-20-10z" fill="#eee" />
      </>
    ),
  },
  {
    name: '阅读器',
    art: (
      <>
        <rect width="36" height="36" fill="#0b70df" />
        <path d="M17 33c0-9-4-15-10-18 6 0 9 4 11 10 0-6 0-9 1-12l-4-4 5 1 7 0-4 5-3 12c2-6 7-8 15-4-7-1-11 2-14 10zM1 11c5-1 11 2 14 12-3-5-8-8-14-12zM12 30l6 3 6-3-6-2z" fill="#fff" />
        <path d="M0 34h36v2H0z" fill="#ff00f0" />
      </>
    ),
  },
  {
    name: '微信',
    art: (
      <>
        <path d="M4 23A13 11 0 1 1 12 26l-5 2z" fill="#2dcc6e" />
        <circle cx="9" cy="11" r="1.600" fill="#173" />
        <circle cx="18" cy="11" r="1.600" fill="#173" />
        <path d="M34 28A10 9 0 1 0 28 31l6 2z" fill="#e2e2e2" />
        <circle cx="22" cy="20" r="1.300" fill="#777" />
        <circle cx="29" cy="20" r="1.300" fill="#777" />
      </>
    ),
  },
  {
    name: 'QQ',
    art: (
      <>
        <path d="M9 31c-8 5 1 5 9 2 8 3 17 3 9-2z" fill="#f7a51a" />
        <path d="M8 14C7-4 29-4 28 14c4 7 6 14 3 14l-3-3c-2 12-18 12-20 0l-3 3c-3 0-1-7 3-14z" fill="#0b0b0b" />
        <ellipse cx="18" cy="25" rx="9" ry="8.500" fill="#fff" />
        <ellipse cx="15" cy="7" rx="2.200" ry="3" fill="#fff" />
        <ellipse cx="21" cy="7" rx="2.200" ry="3" fill="#fff" />
        <circle cx="15.500" cy="7.500" r="1" fill="#000" />
        <circle cx="20.500" cy="7.500" r="1" fill="#000" />
        <ellipse cx="18" cy="12.500" rx="6" ry="2" fill="#f7a51a" />
        <path d="M7 15c6 4 16 4 22 0l1 4c-4 3-9 3-14 3v4h-4v-5l-6-2z" fill="#e81c1c" />
      </>
    ),
  },
  {
    name: '文件资源管理器', running: true,
    art: (
      <>
        <path d="M2 6q0-1 1-1h12l2 3-3 3H2z" fill="#dc9a0a" />
        <path d="M2 10h13l4-3h14q1 0 1 1v21q0 1-1 1H3q-1 0-1-1z" fill="#fdd265" />
        <path d="M7 31V20q0-1 1-1h19q1 0 1 1v11h-5v-6H12v6z" fill="#3a97dd" />
      </>
    ),
  },
  {
    name: '窗体', running: true,
    art: (
      <>
        <path d="M6 8l20 3v19L6 26z" fill="#fff" stroke="#111" strokeWidth="1.300" />
        <path d="M6 8l20 4v2L6 10z" fill="#22b3b0" stroke="#064" strokeWidth="1" />
        <path d="M26 24l7 3-7 3z" fill="#888" />
      </>
    ),
  },
  { name: 'CAXA', running: true, art: <g transform="translate(1 1) scale(1.400)">{icons.caxa}</g> },
];

const downArrow = (
  <svg width="10" height="6" viewBox="0 0 10 6" aria-hidden="true">
    <path d="M0 0h10L5 6z" fill="#777" />
  </svg>
);

function Tools({ items }: { items: string[] }) {
  return (
    <>
      {items.map((item, i) => {
        if (item === '|') return <Divider key={i} />;
        if (item === 'v') return <NarrowButton key={i} aria-label="更多">{downArrow}</NarrowButton>;
        return <ToolButton key={i} aria-label={item}><Icon name={item} /></ToolButton>;
      })}
    </>
  );
}

function Column({ items, label }: { items: string[]; label: string }) {
  return (
    <ToolColumn role="toolbar" aria-label={label}>
      <Grip $flat />
      {items.map((item, i) =>
        item === '|' ? <ColumnDivider key={i} /> : <ColumnButton key={i} aria-label={item}><Icon name={item} /></ColumnButton>
      )}
    </ToolColumn>
  );
}

type ComboProps = { width: number; pad: number; inset: number; label: string; value: string; children: React.ReactNode };

function Combo({ width, pad, inset, label, value, children }: ComboProps) {
  return (
    <ComboBox $width={width}>
      <ComboIcons $pad={pad}>{children}</ComboIcons>
      <ComboSelect aria-label={label} defaultValue={value} $inset={inset}>
        <option>{value}</option>
      </ComboSelect>
      <ComboArrow>{downArrow}</ComboArrow>
    </ComboBox>
  );
}

function DrawingCanvas() {
  return (
    <Drawing>
      <DrawingSvg role="img" aria-label="CAXA-Z">
        <defs>
          <linearGradient id="pale" x1="0" y1="0" x2="1" y2="1">
            <stop offset="0" stopColor="#fff" />
            <stop offset="1" stopColor="#d4d6d9" />
          </linearGradient>
          <radialGradient id="globe" cx=".4" cy=".5" r=".6">
            <stop offset="0" stopColor="#7af0ff" />
            <stop offset=".5" stopColor="#16a3e8" />
            <stop offset="1" stopColor="#082a90" />
          </radialGradient>
          <linearGradient id="edge" x1="0" y1="0" x2="1" y2="0.500">
            <stop offset="0" stopColor="#1c9ee0" />
            <stop offset=".5" stopColor="#35c1c8" />
            <stop offset="1" stopColor="#6be04e" />
          </linearGradient>
        </defs>
        <g fill="none" stroke="#fff" strokeWidth="3" strokeLinejoin="round" shapeRendering="crispEdges">
          <polyline points={toothFlank} />
          <polyline points={blankOutline} />
        </g>
        <g stroke="#a80000" strokeWidth="2">
          <path d="M0 364H633" />
          <path d="M646 364H3000" strokeDasharray="17 13 92 13" />
        </g>
        <path d="M97 363v2M126 363v2M259 363v2M290 363v2M366 363v2M395 363v2M501 363v2M530 363v2" stroke="#400" strokeWidth="1" />
        <path d="M324 738v-9h16v9" fill="none" stroke="#00c060" strokeWidth="1.500" />
        <path d="M332 701v36M295 737h73" stroke="#fff" strokeWidth="1.500" />
      </DrawingSvg>
    </Drawing>
  );
}

export default function App() {
  return (
    <Shell>
      <GlobalStyle />
      <TitleBar>
        <Icon name="caxa" />
        <WindowTitle>{'CAXA电子图板2013 - 机械版 - [F:\\计算夹\\NGW行星齿轮\\CAXA-Z]'}</WindowTitle>
        <CaptionGroup>
          <CaptionButton aria-label="最小化">
            <svg width="15" height="15" fill="none" stroke="#8c8c8c"><path d="M0 7.500h15" /></svg>
          </CaptionButton>
          <CaptionButton aria-label="还原">
            <svg width="15" height="15" fill="none" stroke="#8c8c8c"><path d="M.5 3.500h11v11H.5zM3.500 3.500v-3h11v11h-3" /></svg>
          </CaptionButton>
          <CaptionButton aria-label="关闭">
            <svg width="15" height="15" fill="none" stroke="#8c8c8c"><path d="M0 0l15 15M15 0L0 15" /></svg>
          </CaptionButton>
        </CaptionGroup>
      </TitleBar>
      <CaptureTab />

      <MenuBar aria-label="菜单">
        <Grip />
        <MenuLogo><Icon name="caxa" size={22} /></MenuLogo>
        <MenuList>
          {menus.map(m => <li key={m}><MenuButton>{m}</MenuButton></li>)}
        </MenuList>
        <MdiGroup>
          <TrayButton aria-label="最小化文档">
            <svg width="18" height="18"><rect x="1" y="7" width="15" height="6" rx="1" fill="#e6eaf2" stroke="#555f7a" strokeWidth="1.500" /></svg>
          </TrayButton>
          <TrayButton aria-label="还原文档">
            <svg width="18" height="18" fill="#e6eaf2" stroke="#555f7a" strokeWidth="1.500"><path d="M7 1h10v10H7zM10 5h4v3h-4zM1 6h10v10H1zM4 10h4v3H4z" /></svg>
          </TrayButton>
          <TrayButton aria-label="关闭文档">
            <svg width="18" height="18" fill="#e6eaf2" stroke="#555f7a" strokeWidth="1.500"><path d="M1 1h5l3 3 3-3h5v2l-4 5 4 4v2h-5l-3-3-3 3H1v-2l4-4-4-5z" /></svg>
          </TrayButton>
        </MdiGroup>
      </MenuBar>

      <ToolRow>
        <ToolGroup role="toolbar" $min={565}>
          <Grip />
          <Tools items={standardTools} />
        </ToolGroup>
        <ToolGroup role="toolbar" $min={823}>
          <Grip />
          <Combo width={196} pad={6} inset={1} label="图层" value="EB0">
            <Icon name="bulb" size={22} />
            <Icon name="sun" size={22} />
            <Icon name="unlock" size={22} />
            <Icon name="plot" size={24} />
            <Icon name="swatch" size={18} />
          </Combo>
          <ToolButton aria-label="图层设置"><Icon name="layers" /></ToolButton>
          <Combo width={129} pad={11} inset={6} label="颜色" value="ByLayer">
            <Icon name="swatch" size={20} />
          </Combo>
          <ToolButton aria-label="颜色设置"><Icon name="wheel" /></ToolButton>
          <Combo width={158} pad={11} inset={8} label="线型" value="ByLayer">
            <LineSample $weight={2} $width={48} $color="#f02c2c" />
          </Combo>
          <ToolButton aria-label="线型设置"><Icon name="linetypes" /></ToolButton>
          <Combo width={159} pad={12} inset={14} label="线宽" value="ByLayer">
            <LineSample $weight={4} $width={36} $color="#000" />
          </Combo>
          <ToolButton aria-label="线宽设置"><Icon name="weights" /></ToolButton>
        </ToolGroup>
      </ToolRow>

      <ToolRow>
        {secondRow.map((g, i) => (
          <ToolGroup key={i} role="toolbar" $min={g.width}>
            <Grip />
            <Tools items={g.items} />
          </ToolGroup>
        ))}
      </ToolRow>

      <Workspace>
        <SideDock>
          <Column items={drawTools} label="绘图工具" />
          <Column items={editTools} label="编辑工具" />
          <PanelTabs>
            <PanelTab>
              <Icon name="library" size={22} />
              <PanelTabLabel>图库</PanelTabLabel>
            </PanelTab>
            <PanelTab>
              <Icon name="property" size={22} />
              <PanelTabLabel>特性</PanelTabLabel>
            </PanelTab>
          </PanelTabs>
        </SideDock>
        <Documents>
          <TabStrip>
            <DocumentTab>
              <TabShape width="162" height="28">
                <path d="M2 29L28 2q2-1.500 4-1.500h125q4 0 4 4V29" fill="#fff" stroke="#5b7291" strokeWidth="1.500" />
              </TabShape>
              <TabName>CAXA-Z</TabName>
              <TabClose aria-label="关闭标签">
                <svg width="12" height="12"><path d="M1 1l10 10M11 1L1 11" stroke="#777" strokeWidth="2" /></svg>
              </TabClose>
            </DocumentTab>
            <TabList aria-label="文档列表">
              <svg width="14" height="8"><path d="M0 0h14L7 8z" fill="#666" /></svg>
            </TabList>
          </TabStrip>
          <DrawingCanvas />
          <ModelStrip>
            <NavButton aria-label="首页"><svg width="10" height="12"><path d="M0 1h1.500v10H0zM10 0v12L3 6z" fill="#444" /></svg></NavButton>
            <NavButton aria-label="上一页"><svg width="7" height="12"><path d="M7 0v12L0 6z" fill="#444" /></svg></NavButton>
            <NavButton aria-label="下一页"><svg width="7" height="12"><path d="M0 0v12l7-6z" fill="#444" /></svg></NavButton>
            <NavButton aria-label="末页"><svg width="10" height="12"><path d="M8.500 1H10v10H8.500zM0 0v12l7-6z" fill="#444" /></svg></NavButton>
            <ModelTab>模型</ModelTab>
          </ModelStrip>
        </Documents>
      </Workspace>

      <CommandDock>
        <CommandGrip><Grip /></CommandGrip>
      </CommandDock>

      <StatusBar>
        <CommandLine>命令:<CommandInput aria-label="命令" /></CommandLine>
        <StatusInfo>
          <span>空命令</span>
          <Coordinates>X:16.552, Y:-0.633</Coordinates>
        </StatusInfo>
        <StatusToggle>正交</StatusToggle>
        <StatusToggle $on>线宽</StatusToggle>
        <StatusToggle>动态输入</StatusToggle>
        <StatusToggle>智能</StatusToggle>
        <svg width="12" height="6"><path d="M2 0h8L6 5z" fill="#777" /></svg>
      </StatusBar>

      <Taskbar>
        <TaskButton $width={72} aria-label="开始">
          <svg width="24" height="24"><path d="M0 3.500l11-1.500v9.500H0zM12 1.800L24 0v11.500H12zM0 12.500h11V22L0 20.500zM12 12.500h12V24l-12-1.700z" /></svg>
        </TaskButton>
        <TaskButton $width={72} aria-label="搜索">
          <svg width="26" height="26" fill="none" stroke="#000" strokeWidth="1.500"><circle cx="16.500" cy="9" r="8" /><path d="M11 15L1 25" /></svg>
        </TaskButton>
        <AppList>
          {apps.map(a => (
            <TaskButton key={a.name} aria-label={a.name} $running={a.running} $active={a.active}>
              <Glyph width="36" height="36" viewBox="0 0 36 36" fill="none">{a.art}</Glyph>
            </TaskButton>
          ))}
        </AppList>
        <Tray>
          <TrayButton aria-label="显示隐藏的图标">
            <svg width="18" height="12" fill="none" stroke="#000" strokeWidth="1.500"><path d="M1 10l8-8 8 8" /></svg>
          </TrayButton>
          <TrayButton aria-label="电池">
            <svg width="25" height="18"><path d="M6 4.500h16v11H6V12" fill="none" stroke="#000" strokeWidth="1.500" /><path d="M9 6h12v8H8v-4zM23 8h2v4h-2z" /><path d="M1.500 3.500h5v4q-2.500 3-5 0zM2.500 3.500V0M5.500 3.500V0M4 9v5" fill="#eee" stroke="#000" /></svg>
          </TrayButton>
          <TrayButton aria-label="网络">
            <svg width="20" height="20" fill="none" stroke="#222" strokeWidth="1.300"><path d="M1 19A18 18 0 0 1 19 1" stroke="#888" /><path d="M6 19A13 13 0 0 1 19 6M10 19a9 9 0 0 1 9-9M14 19a5 5 0 0 1 5-5" /><circle cx="18" cy="18" r="1.500" fill="#000" /></svg>
          </TrayButton>
          <TrayButton aria-label="音量">
            <svg width="24" height="20" fill="none" stroke="#111" strokeWidth="1.300"><path d="M1 7h3l5-5v16l-5-5H1zM12 7q2 3 0 6M15 5q4 5 0 10M18 2q6 8 0 16" /></svg>
          </TrayButton>
          <Clock>5:54<br />2022/6/12</Clock>
          <Notifications aria-label="通知">
            <svg width="38" height="40"><path d="M0 5h24v20H13l-4 6v-6H0z" fill="#000" /><path d="M5 10h14M5 14h14M5 18h9" stroke="#fff" strokeWidth="1.500" /></svg>
            <Badge>2</Badge>
          </Notifications>
          <ShowDesktop aria-label="显示桌面" />
        </Tray>
      </Taskbar>
    </Shell>
  );
}
